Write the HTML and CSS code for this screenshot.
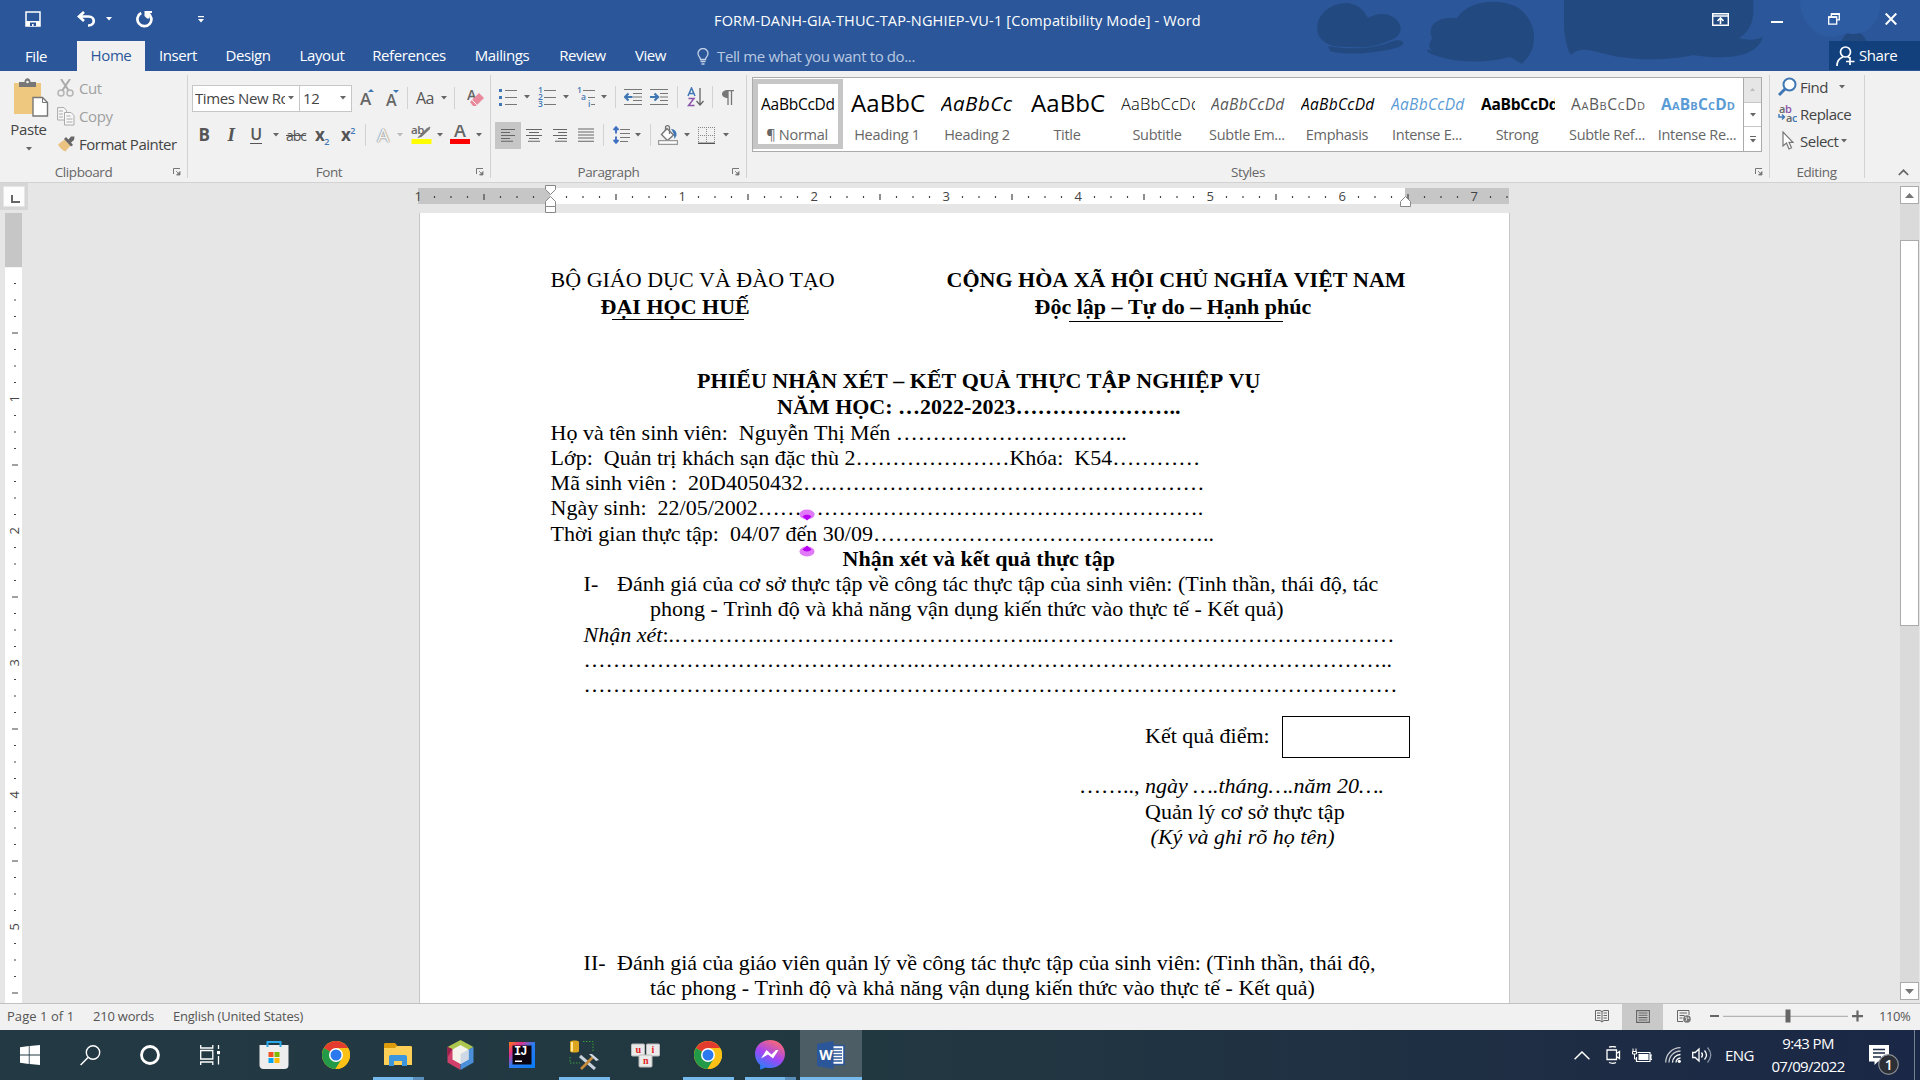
FILE: index.html
```html
<!DOCTYPE html>
<html lang="en">
<head>
<meta charset="utf-8">
<title>FORM-DANH-GIA-THUC-TAP-NGHIEP-VU-1 - Word</title>
<link rel="stylesheet" href="styles.css">
</head>
<body>
<svg class="defs" width="0" height="0">
  <defs>
    <symbol id="launcher" viewBox="0 0 8 8"><path d="M.5 6V.5H7" fill="none" stroke="#777"/><path d="M3 3l3 3M7 3.5V7H3.5z" fill="#777" stroke="#777" stroke-width=".8"/></symbol>
    <symbol id="arrow" viewBox="0 0 6 4"><path d="M0 0h6L3 3.4z"/></symbol>
    <symbol id="chrome" viewBox="0 0 28 28">
      <circle cx="14" cy="14" r="14" fill="#fbc116"/>
      <path d="M14 14L1.9 7A14 14 0 0 1 26.1 7z" fill="#e33b2e"/>
      <path d="M1.9 7A14 14 0 0 0 13.5 28L20 17.5 14 14z" fill="#229a48"/>
      <path d="M14 7h12.1A14 14 0 0 1 13.5 28l6.6-10.5z" fill="#fbc116"/>
      <circle cx="14" cy="14" r="7" fill="#fff"/><circle cx="14" cy="14" r="5.5" fill="#2b78ef"/>
    </symbol>
  </defs>
</svg>

<header class="titlebar">
  <svg class="clouds" width="620" height="71" viewBox="0 0 620 71">
    <g fill="#234a80">
      <path d="M20 38C10 20 28 2 48 3c12 2 16 8 20 15 14-8 28-3 32 7 3 7-3 14-12 16-16 8-30 6-42 6-14 0-20-3-26-9z"/>
      <path d="M28 46c20 4 46 3 62-4 12-5 20 2 6 6-20 5-50 8-66 3z"/>
      <path d="M132 38c-6-14 8-22 25-20C168 0 202-3 220 9c16 13 18 34 8 48l-6 7-12-7c-22 6-50 6-70 0-16-4-16-10-8-6-5-5-2-8 0-13z"/>
      <path d="M264 0h189c2 19-2 31-14 38 14 4 24 0 24-2-4 20-34 25-70 19-20 5-60 7-92-2-12-3-22-6-30 2-4-5-6-17-7-26z"/>
      <path d="M540 46c4-20 24-19 28 0z"/>
    </g>
    <path d="M500 0h80c2 22-14 38-34 33-24 12-46-8-46-33z" fill="#2d5ca3"/>
  </svg>
  <div class="quick">
    <svg width="16" height="16" viewBox="0 0 16 16"><path d="M1 1h14v14H1z" fill="none" stroke="#fff" stroke-width="1.5"/><path d="M1 10h14v5H1z" fill="#fff"/><path d="M5 11.5h6V15H8.6v-2H7v2H5z" fill="#2b579a"/></svg>
    <svg width="19" height="16" viewBox="0 0 19 16"><path d="M7 1L2 5.5 7 10M3 5.5h8.5c7 0 7 9 0 9H11" fill="none" stroke="#fff" stroke-width="2.7"/></svg>
    <svg class="white" width="6" height="4"><use href="#arrow"/></svg>
    <svg width="17" height="17" viewBox="0 0 17 17"><path d="M5.2 2A7 7 0 1 0 12 2.2" fill="none" stroke="#fff" stroke-width="2.7"/><path d="M8.5 0H16v2h-2.5v5.6h-2.4L8.5 5z" fill="#fff"/></svg>
    <svg width="6" height="7" viewBox="0 0 6 7"><path d="M0 0h6v1.2H0zM0 3h6L3 6.4z" fill="#fff"/></svg>
  </div>
  <div class="title">FORM-DANH-GIA-THUC-TAP-NGHIEP-VU-1 [Compatibility Mode] - Word</div>
  <div class="winctl">
    <svg width="17" height="13" viewBox="0 0 17 13"><path d="M.7.7h15.6v11.6H.7zM1 3h15" fill="none" stroke="#fff" stroke-width="1.4"/><path d="M8.5 11V5.5M5.5 8l3-3 3 3" fill="none" stroke="#fff" stroke-width="1.6"/></svg>
    <svg width="12" height="12" viewBox="0 0 12 12"><path d="M0 8h12v2H0z" fill="#fff"/></svg>
    <svg width="12" height="12" viewBox="0 0 12 12"><path d="M3.3 3.5V.8h8v6H9M.7 4h8v7.2h-8z" fill="none" stroke="#fff" stroke-width="1.3"/><path d="M3 .3h9v1.6H3zM0 3.5h9v1.6H0z" fill="#fff"/></svg>
    <svg width="12" height="12" viewBox="0 0 12 12"><path d="M.7.5l10.6 11M11.3.5L.7 11.5" stroke="#fff" stroke-width="2"/></svg>
  </div>
</header>

<nav class="tabs">
  <span class="file">File</span><span class="active">Home</span><span>Insert</span><span>Design</span><span>Layout</span><span>References</span><span>Mailings</span><span>Review</span><span>View</span>
  <div class="tell">
    <svg width="12" height="17" viewBox="0 0 12 17"><path d="M3.5 11.5C3.5 9 1 8.500 1 5.500a5 5 0 0 1 10 0c0 3-2.500 3.500-2.500 6zM3.500 13.500h5M4.500 16h3" fill="none" stroke="#c3d0e6" stroke-width="1.300"/></svg>
    <span>Tell me what you want to do...</span>
  </div>
  <div class="share">
    <svg width="19" height="20" viewBox="0 0 19 20"><circle cx="9.500" cy="6" r="5" fill="none" stroke="#fff" stroke-width="1.700"/><path d="M1 20c0-5 3-8 6-9M12 11l2 1M14 11v8M10 15.500h8.500" fill="none" stroke="#fff" stroke-width="1.700"/></svg>
    <span>Share</span>
  </div>
</nav>

<section class="ribbon">
  <div class="group g-clip">
    <div class="body clip">
      <div class="paste">
        <svg width="36" height="40" viewBox="0 0 36 40"><path d="M1 5h27v31H1z" fill="#edc87e"/><path d="M6 9V4h5.500c0-5 6-5 6 0H23v5z" fill="#777"/><circle cx="14.500" cy="4" r="1.300" fill="#f1f1f1"/><path d="M20 19.500h9.500l5 5V38H20z" fill="#fff" stroke="#777" stroke-width="1.400"/><path d="M29.500 19.500v5h5" fill="none" stroke="#777"/></svg>
        <span>Paste</span>
        <svg class="gray" width="6" height="4"><use href="#arrow"/></svg>
      </div>
      <div class="cliplist">
        <div class="dim"><svg width="18" height="18" viewBox="0 0 18 18"><path d="M4 0l8 12M13 0L5 12" fill="none" stroke="#aaa" stroke-width="2"/><circle cx="4" cy="14" r="3" fill="none" stroke="#b5b5b5" stroke-width="1.500"/><circle cx="13" cy="14" r="3" fill="none" stroke="#b5b5b5" stroke-width="1.500"/></svg>Cut</div>
        <div class="dim"><svg width="18" height="19" viewBox="0 0 18 19"><path d="M.6.600H7l2.500 3V13H.600z" fill="#f8f8f8" stroke="#aaa"/><path d="M7.500 5.500H14l3 3v9.500H7.500z" fill="#f8f8f8" stroke="#aaa"/><path d="M2 4h4M2 7h4M2 10h4M9.500 9h4M9.500 12h6M9.500 15h6" stroke="#aaa"/></svg>Copy</div>
        <div class="painter"><svg width="18" height="16" viewBox="0 0 18 16"><path d="M7.500 3.500l6 6-5 6c-3-1-6-4-7.500-7z" fill="#eac282"/><path d="M7 3l2-2 2.500 2.500L14 .5l3.500 0-.5 3.500-3 2.500L16 9l-2 1.500z" fill="#666"/></svg>Format Painter</div>
      </div>
    </div>
    <footer><span>Clipboard</span><svg width="8" height="8"><use href="#launcher"/></svg></footer>
  </div>

  <div class="group g-font">
    <div class="body">
      <div class="row f1">
        <div class="combo"><span>Times New Ro</span><svg class="gray" width="6" height="4"><use href="#arrow"/></svg></div>
        <div class="combo"><span>12</span><svg class="gray" width="6" height="4"><use href="#arrow"/></svg></div>
        <b class="grow">A<svg width="6" height="3" viewBox="0 0 6 3"><path d="M0 3l3-3 3 3z" fill="#3f77b5"/></svg></b>
        <b class="grow shrink">A<svg width="6" height="3" viewBox="0 0 6 3"><path d="M0 0h6L3 3z" fill="#3f77b5"/></svg></b>
        <i class="sep"></i>
        <span class="aa">Aa</span>
        <svg class="gray" width="6" height="4"><use href="#arrow"/></svg>
        <i class="sep"></i>
        <svg width="17" height="20" viewBox="0 0 17 20"><text x="0" y="11.500" class="ic" font-size="14" font-weight="600">A</text><path d="M3 14l9-9 5 5-8 8H6z" fill="#e88a9b"/><path d="M5 12l5 5" stroke="#f1f1f1"/></svg>
      </div>
      <div class="row f2">
        <b class="glyph">B</b>
        <b class="glyph it">I</b>
        <b class="glyph un">U</b>
        <svg class="gray" width="6" height="4"><use href="#arrow"/></svg>
        <span class="strike">abc</span>
        <b class="glyph">x<sub>2</sub></b>
        <b class="glyph">x<sup>2</sup></b>
        <i class="sep"></i>
        <span class="effect">A</span>
        <svg class="light" width="6" height="4"><use href="#arrow"/></svg>
        <svg width="21" height="20" viewBox="0 0 21 20"><text x="0" y="8.500" class="ic" font-size="11.500" font-weight="600">ab</text><path d="M7 12l9-9 3.500-1.500-1 3-8 7.500-4 1z" fill="#777"/><path d="M.5 14h20v5H.5z" fill="#ff0"/></svg>
        <svg class="gray" width="6" height="4"><use href="#arrow"/></svg>
        <svg width="20" height="20" viewBox="0 0 20 20"><text x="4" y="12" class="ic" font-size="18" font-weight="600">A</text><path d="M0 14h20v5H0z" fill="red"/></svg>
        <svg class="gray" width="6" height="4"><use href="#arrow"/></svg>
      </div>
    </div>
    <footer><span>Font</span><svg width="8" height="8"><use href="#launcher"/></svg></footer>
  </div>

  <div class="group g-para">
    <div class="body">
      <div class="row p1">
        <svg width="18" height="18" viewBox="0 0 18 18"><path d="M6 2.500h12M6 9.500h12M6 16.500h12" stroke="#777" stroke-width="1.200"/><path d="M0 1h3v3H0zM0 8h3v3H0zM0 15h3v3H0z" fill="#3f77b5"/></svg>
        <svg class="gray" width="6" height="4"><use href="#arrow"/></svg>
        <svg width="18" height="20" viewBox="0 0 18 20"><path d="M6 3.500h12M6 10.500h12M6 17.500h12" stroke="#777" stroke-width="1.200"/><g class="num"><text x="0" y="6">1</text><text x="0" y="13">2</text><text x="0" y="20">3</text></g></svg>
        <svg class="gray" width="6" height="4"><use href="#arrow"/></svg>
        <svg width="18" height="20" viewBox="0 0 18 20"><path d="M6 3.500h12M11 10.500h7M14 17.500h4" stroke="#777" stroke-width="1.200"/><g class="num"><text x="0" y="6">1</text><text x="4" y="13">a</text><text x="11" y="19.500">i</text></g></svg>
        <svg class="gray" width="6" height="4"><use href="#arrow"/></svg>
        <i class="sep"></i>
        <svg width="18" height="18" viewBox="0 0 18 18"><path d="M0 1.500h18M9 5.500h9M9 9h9M9 12.500h9M0 16.500h18" stroke="#777" stroke-width="1.200"/><path d="M8.500 9H1.500M4.500 5.500L1 9l3.500 3.500" fill="none" stroke="#3f77b5" stroke-width="2.200"/></svg>
        <svg width="18" height="18" viewBox="0 0 18 18"><path d="M0 1.500h18M10 5.500h8M10 9h8M10 12.500h8M0 16.500h18" stroke="#777" stroke-width="1.200"/><path d="M0 9h7M4.500 5.500L8 9l-3.500 3.500" fill="none" stroke="#3f77b5" stroke-width="2.200"/></svg>
        <i class="sep"></i>
        <svg width="17" height="20" viewBox="0 0 17 20"><path d="M1 9L4.500 1 8 9M2 6.500h5" fill="none" stroke="#3f77b5" stroke-width="1.500"/><path d="M1.500 11.500H7l-5.500 7H7.500" fill="none" stroke="#8b54a8" stroke-width="1.500"/><path d="M13 1v17M9.500 14l3.500 4 3.500-4" fill="none" stroke="#666" stroke-width="1.300"/></svg>
        <i class="sep"></i>
        <svg width="12" height="15" viewBox="0 0 12 15"><path d="M6 0C-2 0-2 8 6 8z" fill="#777"/><path d="M5.500 .5H12M6 0v15M9.500 0v15" fill="none" stroke="#777" stroke-width="1.300"/></svg>
      </div>
      <div class="row p2">
        <span class="on"><svg width="14" height="14" viewBox="0 0 14 14"><path d="M0 1.500h14M0 4.500h9M0 7.500h14M0 10.500h9M0 13.300h12" stroke="#666" stroke-width="1.100"/></svg></span>
        <svg width="16" height="14" viewBox="0 0 16 14"><path d="M0 1.500h16M3 4.500h10M0 7.500h16M3 10.500h10M2 13.300h12" stroke="#666" stroke-width="1.100"/></svg>
        <svg width="14" height="14" viewBox="0 0 14 14"><path d="M0 1.500h14M5 4.500h9M0 7.500h14M5 10.500h9M2 13.300h12" stroke="#666" stroke-width="1.100"/></svg>
        <svg width="16" height="14" viewBox="0 0 16 14"><path d="M0 1h16M0 4h16M0 7h16M0 10h16M0 13.300h16" stroke="#666" stroke-width="1.100"/></svg>
        <i class="sep"></i>
        <svg width="17" height="18" viewBox="0 0 17 18"><path d="M7 3.500h10M7 7.500h10M7 11.500h10M7 15.500h8" stroke="#777" stroke-width="1.200"/><path d="M3 1.500v6M3 10.500v6M.5 4L3 1.200 5.500 4M.5 14L3 16.800 5.500 14" fill="none" stroke="#3f6fc0" stroke-width="1.900"/></svg>
        <svg class="gray" width="6" height="4"><use href="#arrow"/></svg>
        <i class="sep"></i>
        <svg width="20" height="20" viewBox="0 0 20 20"><path d="M9 3.500l6.500 6.500-6 5.500L3.500 9.500z" fill="#fff" stroke="#777" stroke-width="1.400"/><path d="M7.500 6V2.500c0-2.500 4-2.500 4 0V9" fill="none" stroke="#777" stroke-width="1.300"/><path d="M13 4c4 0 6 3 5.500 6.500L16.500 14c-.5-3 0-5-3.500-10z" fill="#3f77b5"/><path d="M.6 15.600h18.800V19.400H.6z" fill="#fff" stroke="#999" stroke-width="1.200"/></svg>
        <svg class="gray" width="6" height="4"><use href="#arrow"/></svg>
        <svg width="17" height="17" viewBox="0 0 17 17"><path d="M0 .5h17M.5 0v17M8.500 0v17M16.500 0v17M0 8.500h17" stroke="#888" stroke-dasharray="1 1"/><path d="M0 16.300h17" stroke="#555" stroke-width="1.400"/></svg>
        <svg class="gray" width="6" height="4"><use href="#arrow"/></svg>
      </div>
    </div>
    <footer><span>Paragraph</span><svg width="8" height="8"><use href="#launcher"/></svg></footer>
  </div>

  <div class="group g-styles">
    <div class="body">
      <div class="gallery">
        <div class="style sel"><div class="sample">AaBbCcDd</div><span>¶ Normal</span></div>
        <div class="style"><div class="sample big">AaBbC</div><span>Heading 1</span></div>
        <div class="style"><div class="sample mid">AaBbCc</div><span>Heading 2</span></div>
        <div class="style"><div class="sample big">AaBbC</div><span>Title</span></div>
        <div class="style"><div class="sample sub">AaBbCcDd</div><span>Subtitle</span></div>
        <div class="style"><div class="sample em soft">AaBbCcDd</div><span>Subtle Em...</span></div>
        <div class="style"><div class="sample em">AaBbCcDd</div><span>Emphasis</span></div>
        <div class="style"><div class="sample em blue">AaBbCcDd</div><span>Intense E...</span></div>
        <div class="style"><div class="sample strong">AaBbCcDd</div><span>Strong</span></div>
        <div class="style"><div class="sample caps soft">AaBbCcDd</div><span>Subtle Ref...</span></div>
        <div class="style"><div class="sample caps blue heavy">AaBbCcDd</div><span>Intense Re...</span></div>
        <div class="scroller">
          <div class="off"><svg width="5" height="3" viewBox="0 0 5 3"><path d="M0 3l2.500-3L5 3z" fill="#bbb"/></svg></div>
          <div><svg class="gray" width="6" height="4"><use href="#arrow"/></svg></div>
          <div><svg class="gray" width="6" height="7" viewBox="0 0 6 7"><path d="M0 0h6v1H0zM0 3h6L3 6.400z"/></svg></div>
        </div>
      </div>
    </div>
    <footer><span>Styles</span><svg width="8" height="8"><use href="#launcher"/></svg></footer>
  </div>

  <div class="group g-edit">
    <div class="body editing">
      <div><svg width="19" height="19" viewBox="0 0 19 19"><circle cx="11.500" cy="7.500" r="6" fill="#fff" stroke="#3f77b5" stroke-width="2"/><path d="M7 12l-6 6" stroke="#3f77b5" stroke-width="3"/></svg>Find<svg class="gray far" width="6" height="4"><use href="#arrow"/></svg></div>
      <div><svg width="19" height="19" viewBox="0 0 19 19"><text x="1" y="8.500" class="ic" font-size="11" font-weight="600">a<tspan fill="#8b54a8">b</tspan></text><text x="8" y="17.500" class="ic" font-size="11" font-weight="600">a<tspan fill="#3f77b5">c</tspan></text><path d="M1 10v3h5M4 10.500L6.500 13 4 15.500" fill="none" stroke="#3f77b5" stroke-width="1.400"/></svg>Replace</div>
      <div><svg width="19" height="19" viewBox="0 0 19 19"><path d="M5 1v14l3.500-3 2.500 6 2.500-1.200-2.500-5.500h4z" fill="#fff" stroke="#777" stroke-width="1.200"/></svg>Select<svg class="gray near" width="6" height="4"><use href="#arrow"/></svg></div>
    </div>
    <footer><span>Editing</span></footer>
  </div>
  <div class="collapse"><svg width="11" height="7" viewBox="0 0 11 7"><path d="M.8 6L5.500 1.300 10.200 6" fill="none" stroke="#666" stroke-width="1.700"/></svg></div>
</section>

<main class="work">
  <div class="left">
    <div class="tabsel"><div><svg width="9" height="8" viewBox="0 0 9 8"><path d="M1 0v7h8" fill="none" stroke="#666" stroke-width="2"/></svg></div></div>
    <svg class="vruler" width="17" height="790" viewBox="0 0 17 790">
      <defs><pattern id="vt" width="17" height="132" y="54" patternUnits="userSpaceOnUse"><path d="M9 16.500h2M9 33h2M9 49.500h2M7 66h6M9 82.500h2M9 99h2M9 115.500h2" stroke="#444" stroke-width="1.200"/></pattern></defs>
      <path d="M0 0h17v54H0z" fill="#c6c6c6"/><path d="M0 54.500h17V790H0z" fill="#fff"/><path d="M0 55h17v735H0z" fill="url(#vt)"/>
      <g class="rn"><text transform="translate(14 186) rotate(-90)">1</text><text transform="translate(14 318) rotate(-90)">2</text><text transform="translate(14 450) rotate(-90)">3</text><text transform="translate(14 582) rotate(-90)">4</text><text transform="translate(14 714) rotate(-90)">5</text></g>
    </svg>
  </div>
  <div class="center">
    <svg class="hruler" width="1091" height="30" viewBox="0 0 1091 30">
      <defs><pattern id="ht" width="132" height="16" x="0" y="5" patternUnits="userSpaceOnUse"><path d="M16.500 8v2M33 8v2M49.500 8v2M66 6v6M82.500 8v2M99 8v2M115.500 8v2" stroke="#444" stroke-width="1.200"/></pattern></defs>
      <path d="M0 5h1091v16H0z" fill="#c6c6c6"/><path d="M132 5h855v16H132z" fill="#fff"/><path d="M2 5h1089v16H2z" fill="url(#ht)"/>
      <g class="rn"><text x="0" y="18">1</text><text x="264" y="18">1</text><text x="396" y="18">2</text><text x="528" y="18">3</text><text x="660" y="18">4</text><text x="792" y="18">5</text><text x="924" y="18">6</text><text x="1056" y="18">7</text></g>
      <g fill="#fff" stroke="#888"><path d="M127.500 2.500h10v4l-5 5-5-5z"/><path d="M127.500 23.500v-5l5-5 5 5v5z"/><path d="M127.500 23.500h10v6h-10z"/><path d="M982.500 23.500v-5l5-5 5 5v5z"/></g>
    </svg>
    <article class="page">
      <div class="head">
        <div class="h1">BỘ GIÁO DỤC VÀ ĐÀO TẠO</div>
        <div class="h2"><b>CỘNG HÒA XÃ HỘI CHỦ NGHĨA VIỆT NAM</b></div>
        <div class="h3"><b>ĐẠI HỌC HUẾ</b><hr></div>
        <div class="h4"><b>Độc lập – Tự do – Hạnh phúc</b><hr></div>
      </div>
      <p class="t1"><b>PHIẾU NHẬN XÉT – KẾT QUẢ THỰC TẬP NGHIỆP VỤ</b></p>
      <p class="t2"><b>NĂM HỌC: …2022-2023…………………..</b></p>
      <p>Họ và tên sinh viên:&nbsp; Nguyễn Thị Mến …………………………..</p>
      <p>Lớp:&nbsp; Quản trị khách sạn đặc thù 2…………………Khóa:&nbsp; K54…………</p>
      <p>Mã sinh viên :&nbsp; 20D4050432….……………………………………………</p>
      <p>Ngày sinh:&nbsp; 22/05/2002…………………………………………………….</p>
      <p>Thời gian thực tập:&nbsp; 04/07 đến 30/09………………………………………..</p>
      <p class="t3"><b>Nhận xét và kết quả thực tập</b></p>
      <p class="item"><span>I-</span>Đánh giá của cơ sở thực tập về công tác thực tập của sinh viên: (Tinh thần, thái độ, tác</p>
      <p class="cont">phong - Trình độ và khả năng vận dụng kiến thức vào thực tế - Kết quả)</p>
      <p class="ind"><i>Nhận xét</i>:.………….………………………………..…………………………………………</p>
      <p class="ind">……………………………………….………………………………………………………..</p>
      <p class="ind">…………………………………………………………………………………………………</p>
      <div class="score"><span>Kết quả điểm:</span><div class="scorebox"></div></div>
      <p class="date">…….., <i>ngày ….tháng….năm 20….</i></p>
      <p class="sign">Quản lý cơ sở thực tập</p>
      <p class="sign2"><i>(Ký và ghi rõ họ tên)</i></p>
      <p class="item second"><span>II-</span>Đánh giá của giáo viên quản lý về công tác thực tập của sinh viên: (Tinh thần, thái độ,</p>
      <p class="cont">tác phong - Trình độ và khả năng vận dụng kiến thức vào thực tế - Kết quả)</p>
      <svg class="handles" width="16" height="48" viewBox="0 0 16 48"><g fill="#e07af8"><ellipse cx="8" cy="5.500" rx="7.500" ry="5"/><ellipse cx="8" cy="42.500" rx="7.500" ry="5"/></g><g fill="#b800f5"><path d="M3.500 7.500c2-2.500 7-2.500 9 0L8 11.500zM3.500 40.500c2 2.500 7 2.500 9 0L8 36.500z"/></g></svg>
    </article>
  </div>
  <div class="vscroll">
    <div class="sb"><svg width="9" height="5" viewBox="0 0 9 5"><path d="M0 5l4.500-5L9 5z" fill="#777"/></svg></div>
    <div class="thumb"></div>
    <div class="sb down"><svg width="9" height="5" viewBox="0 0 9 5"><path d="M0 0h9L4.500 5z" fill="#777"/></svg></div>
  </div>
</main>

<div class="status">
  <span class="s1">Page 1 of 1</span><span class="s2">210 words</span><span class="s3">English (United States)</span>
  <div class="views">
    <div><svg width="14" height="14" viewBox="0 0 14 14"><path d="M.5 1.500H5l2 1 2-1h4.500v10H9l-2 1.500-2-1.500H.5zM7 2v11" fill="none" stroke="#666"/><path d="M2 4h3.500M2 6.500h3.500M2 9h3.500M8.500 4H12M8.500 6.500H12M8.500 9H12" stroke="#666"/></svg></div>
    <div class="cur"><svg width="14" height="13" viewBox="0 0 14 13"><path d="M.6.600h12.800v11.800H.6zM2.500 3h9M2.500 5.300h9M2.500 7.600h9M2.500 10h9" fill="none" stroke="#666" stroke-width="1.100"/></svg></div>
    <div><svg width="14" height="13" viewBox="0 0 14 13"><path d="M6 11.500H.5V.5h11.500V5M2.500 3h7.500M2.500 5.500h5M2.500 8h3" fill="none" stroke="#666"/><circle cx="10" cy="9" r="3.800" fill="#777"/><path d="M8 7l2 1-1 3M11 7l1 2" stroke="#ddd" fill="none"/></svg></div>
  </div>
  <svg class="zoombar" width="155" height="14" viewBox="0 0 155 14"><path d="M0 6h9v2H0zM142 6h11v2.200h-11zM146.400 1.500h2.200v11h-2.200z" fill="#666"/><path d="M13 7.300h125" stroke="#a5a5a5"/><path d="M75.500 0.500h5v13h-5z" fill="#666"/></svg>
  <span class="pct">110%</span>
</div>

<footer class="taskbar">
  <div class="sys">
    <svg width="20" height="20" viewBox="0 0 20 20"><path d="M0 2.300L8.800 1.100V9.500H0zM9.600 1L20 0v9.500H9.600zM0 10.400h8.800V19L0 17.800zM9.600 10.400H20V20L9.600 19z" fill="#fff"/></svg>
    <svg width="21" height="21" viewBox="0 0 21 21"><circle cx="13" cy="7.500" r="6.700" fill="none" stroke="#fff" stroke-width="1.400"/><path d="M8 12.500L.6 20" stroke="#fff" stroke-width="1.500"/></svg>
    <svg width="20" height="20" viewBox="0 0 20 20"><circle cx="10" cy="10" r="8.500" fill="none" stroke="#fff" stroke-width="2.800"/></svg>
    <svg width="20" height="20" viewBox="0 0 20 20"><path d="M.7 0v3h12.100V0M.7 5.500h12.100v8.500H.7zM.7 20v-3h12.100v3M18.500 0v4M18.500 11v8.500" fill="none" stroke="#fff" stroke-width="1.300"/><path d="M17 6h3v3.200h-3z" fill="#fff"/></svg>
  </div>
  <div class="apps">
    <div><svg width="30" height="30" viewBox="0 0 30 30"><path d="M.5 5h29v20c0 3-2 4-4 4h-21c-3 0-4-2-4-4z" fill="#eee"/><path d="M9.500 12h5v5h-5z" fill="#f25022"/><path d="M15.500 12h5v5h-5z" fill="#7fba00"/><path d="M9.500 18h5v5h-5z" fill="#00a4ef"/><path d="M15.500 18h5v5h-5z" fill="#ffb900"/><path d="M8.500 7V2h13v5" fill="none" stroke="#29a9e8" stroke-width="2"/></svg></div>
    <div><svg width="28" height="28"><use href="#chrome"/></svg></div>
    <div class="run split"><svg width="28" height="24" viewBox="0 0 28 24"><path d="M0 1.500C0 .5.500 0 1.500 0H11l2.500 3H27v5H0z" fill="#dd9b0c"/><path d="M0 5h11l2-2h13.500c1 0 1.500.500 1.500 1.500V22H0z" fill="#fdcf56"/><path d="M5 23V14c0-1.500 1-2 2-2h14c1.500 0 2 1 2 2v9h-5v-5h-8v5z" fill="#3b96dd"/></svg></div>
    <div><svg width="27" height="30" viewBox="0 0 27 30"><path d="M13.500 0L26.500 7 13.500 14 .5 7z" fill="#adc64d"/><path d="M.5 7l13 7v16L.5 22.500z" fill="#d0406a"/><path d="M26.500 7l-13 7v16l13-7.500z" fill="#4a8fd8"/><path d="M.5 7v10l5-8z" fill="#9c1f48"/><path d="M13.500 5l8 4.500v10l-8 4.500-8-4.500v-10z" fill="#f4f4ec"/><path d="M13.500 14l8-4.500v10l-8 4.500z" fill="#cfd9e5"/></svg></div>
    <div><svg width="26" height="26" viewBox="0 0 26 26"><defs><linearGradient id="ij" x1="0" y1="0" x2="1" y2="1"><stop offset="0" stop-color="#f97a12"/><stop offset=".25" stop-color="#e0318c"/><stop offset=".5" stop-color="#2b7cf0"/><stop offset="1" stop-color="#087cfa"/></linearGradient></defs><path d="M0 0h26v26H0z" fill="url(#ij)"/><path d="M3.500 3.500h19v19h-19z" fill="#0b0410"/><text x="5" y="13" class="ijt">IJ</text><path d="M6 18.500h7v1.500H6z" fill="#fff"/></svg></div>
    <div class="run"><svg width="30" height="30" viewBox="0 0 30 30"><path d="M1 2c0-2 9-2 9 0v9c0 2-9 2-9 0z" fill="#dca51f"/><path d="M3 2v9.500" stroke="#ffe79a" stroke-width="2"/><path d="M14 1.500h10v10M1 17v6h10" fill="none" stroke="#3d9c35" stroke-dasharray="1.500 1.500"/><path d="M11 16l15 13" stroke="#c9d3dd" stroke-width="3"/><path d="M24 17L12 29" stroke="#c68a3a" stroke-width="2.600"/><path d="M20 14l7 7 3-1-7-6z" fill="#cfd8e2"/></svg></div>
    <div><svg width="30" height="26" viewBox="0 0 30 26"><g fill="#e9e9e9" stroke="#b9b9b9"><rect x=".5" y="2" width="13" height="12" rx="1"/><rect x="15.500" y="2" width="13" height="12" rx="1"/><rect x="8" y="13" width="13" height="12" rx="1"/></g><g class="uk"><text x="4.500" y="10.500">u</text><text x="20.500" y="11">i</text><text x="12" y="21.500">n</text></g></svg></div>
    <div class="run"><svg width="28" height="28"><use href="#chrome"/></svg></div>
    <div class="run split"><svg width="30" height="30" viewBox="0 0 30 30"><defs><linearGradient id="ms" x1=".2" y1="1" x2=".7" y2="0"><stop offset="0" stop-color="#1b86fb"/><stop offset=".5" stop-color="#a345f5"/><stop offset="1" stop-color="#fb6a72"/></linearGradient></defs><path d="M15 0c8.500 0 15 6.200 15 14s-6.500 14-15 14c-1.600 0-3-.2-4.400-.6L5.200 29.800V25C2 22.500 0 18.700 0 14 0 6.200 6.500 0 15 0z" fill="url(#ms)"/><path d="M6 18.500l5.500-8.500 5 4.500 4.500-4.500h2.500L18 18.500l-5-4z" fill="#fff"/></svg></div>
    <div class="run cur"><svg width="28" height="28" viewBox="0 0 28 28"><path d="M13 4.500h14v19H13z" fill="#fff" stroke="#2b579a" stroke-width="1.600"/><path d="M16 8h9M16 11h9M16 14h9M16 17h9M16 20h9" stroke="#2b579a" stroke-width="1.400"/><path d="M0 3l16.500-3v28L0 25z" fill="#2b579a"/><text x="2.200" y="18.500" class="wt">W</text></svg></div>
  </div>
  <div class="tray">
    <svg width="16" height="9" viewBox="0 0 16 9"><path d="M.6 8.300L8 1l7.400 7.300" fill="none" stroke="#fff" stroke-width="1.500"/></svg>
    <svg width="15" height="18" viewBox="0 0 15 18"><path d="M1 4h9.500v9.500H1zM10.500 7.500l3-2v7l-3-2M3 1.200C5.500.300 8 .300 10 1.200M3 16.500c2.500 1 5 1 7 0" fill="none" stroke="#fff" stroke-width="1.300"/></svg>
    <svg width="20" height="15" viewBox="0 0 20 15"><path d="M5.500 4.500H18v9H4.500V9" fill="none" stroke="#fff" stroke-width="1.200"/><path d="M6.500 6h10v6h-10z" fill="#fff"/><path d="M18.500 7v4.500h1.500V7zM1 .5v3M4 .5v3M.5 3.500h4V6h-4zM2.500 6v5H5" fill="none" stroke="#fff"/></svg>
    <svg width="16" height="16" viewBox="0 0 16 16"><g fill="none" stroke="#fff" stroke-width="1.300"><path d="M11 15.500A4.500 4.500 0 0 1 15.500 11M7.500 15.500a8 8 0 0 1 8-8"/><path d="M4 15.500A11.500 11.500 0 0 1 15.500 4M.7 15.500A14.800 14.800 0 0 1 15.500.7" opacity=".75"/></g><circle cx="14.300" cy="14.300" r="1.600" fill="#fff"/></svg>
    <svg width="20" height="18" viewBox="0 0 20 18"><path d="M.7 6.500h2.500L7 3v12l-3.800-3.500H.7z" fill="none" stroke="#fff" stroke-width="1.300"/><path d="M9.500 6.500q2 2.500 0 5M12.500 4.500q4 4.500 0 9" fill="none" stroke="#fff" stroke-width="1.300"/><path d="M15.500 1.500q6.500 7.500 0 15" fill="none" stroke="#8893a5" stroke-width="1.300"/></svg>
    <span class="eng">ENG</span>
    <div class="clock"><span>9:43 PM</span><span>07/09/2022</span></div>
    <div class="note"><svg width="31" height="32" viewBox="0 0 31 32"><path d="M0 1h20v16.500H9L5.500 21v-3.500H0z" fill="#fff"/><path d="M4 5.500h12M4 9h12M4 13h8" stroke="#1c2b45" stroke-width="1.300"/><circle cx="19.500" cy="20.500" r="9.800" fill="#2c2f35" stroke="#8a8f96" stroke-width="1.200"/><text x="19.500" y="25.800" text-anchor="middle" class="badge">1</text></svg></div>
    <i class="peek"></i>
  </div>
</footer>
</body>
</html>
```
FILE: styles.css
```css
* { box-sizing: border-box; }
body { margin: 0; width: 1920px; height: 1080px; overflow: hidden; display: flex; flex-direction: column; font-family: "Open Sans", "Noto Sans", sans-serif; font-size: 15px; letter-spacing: -0.4px; color: #444; background: #e6e6e6; }
svg { display: block; flex: none; }
.defs { position: absolute; }
.gray { fill: #666; }
.light { fill: #bbb; }
.white { fill: #fff; }

/* title bar and tabs */
.titlebar { position: relative; z-index: 1; height: 41px; background: #2b579a; color: #fff; display: grid; grid-template-columns: 714px 1fr 220px; align-items: center; }
.titlebar::after { content: ""; position: absolute; left: 0; top: 41px; width: 1300px; height: 30px; background: #2b579a; }
.clouds { position: absolute; left: 1300px; top: 0; background: #2b579a; }
.quick { display: flex; align-items: center; padding: 0 0 3px 25px; }
.quick svg:nth-child(2) { margin-left: 36px; }
.quick svg:nth-child(3) { margin-left: 10px; }
.quick svg:nth-child(4) { margin-left: 24px; }
.quick svg:nth-child(5) { margin-left: 45px; }
.title { position: relative; font-size: 14.5px; letter-spacing: .15px; white-space: nowrap; }
.winctl { position: relative; display: flex; align-items: center; padding: 0 0 3px 12px; }
.winctl svg + svg { margin-left: 42px; }
.winctl svg:nth-child(3), .winctl svg:nth-child(4) { margin-left: 45px; }
.tabs { position: relative; z-index: 2; height: 30px; color: #fff; display: grid; grid-template-columns: 77px 68px 66px 74px 74px 100px 86px 75px 61px 1fr 91px; line-height: 29px; text-align: center; }
.file { padding-right: 5px; padding-top: 1px; }
.active { background: #f1f1f1; color: #2b579a; }
.tell { display: flex; align-items: center; padding-left: 16px; gap: 8px; color: #b9c8e0; }
.tell span { letter-spacing: -.37px; }
.share { display: flex; align-items: center; gap: 4px; padding-left: 7px; background: #12407c; height: 29px; }

/* ribbon */
.ribbon { height: 112px; background: #f1f1f1; border-bottom: 1px solid #d2d2d2; display: flex; }
.group { display: flex; flex-direction: column; position: relative; }
.group::after { content: ""; position: absolute; right: 0; top: 4px; height: 103px; width: 1px; background: #d2d2d2; }
.body { height: 88px; }
.group footer { height: 23px; display: grid; grid-template-columns: 1fr; align-items: center; justify-items: center; font-size: 13.5px; letter-spacing: -.4px; color: #666; padding-top: 2px; }
.group footer span, .group footer svg { grid-area: 1 / 1; }
.group footer svg { justify-self: end; margin-right: 7px; margin-top: 1px; }
.group footer span { margin-right: 21px; }
.g-clip { width: 188px; }
.g-font { width: 303px; }
.g-para { width: 256px; }
.g-styles { width: 1023px; }
.g-edit { width: 95px; }
.group.g-edit footer span { margin-right: 2px; }
.clip { display: flex; }
.paste { width: 57px; display: flex; flex-direction: column; align-items: center; padding-top: 7px; }
.paste svg:first-child { margin-left: 5px; }
.paste span { line-height: 20px; margin-top: 1px; }
.paste .gray { margin-top: 8px; }
.cliplist { padding-top: 3px; }
.cliplist > div { display: flex; align-items: center; gap: 4px; height: 28px; white-space: nowrap; }
.painter { letter-spacing: -.5px; }
.dim { color: #a0a0a0; }
.row { display: grid; align-items: center; justify-items: center; height: 38px; }
.f1 { padding: 8px 0 0 4px; height: 46px; grid-template-columns: 108px 52px 27px 24px 8px 28px 9px 12px 31px; }
.f2 { padding-left: 4px; grid-template-columns: 24px 30px 20px 20px 20px 32px 20px 14px 22px 12px 30px 8px 32px 6px; margin-top: -1px; }
.combo { width: 100%; height: 27px; border: 1px solid #c6c6c6; background: #fff; display: flex; align-items: center; justify-content: space-between; padding: 0 5px 0 2px; color: #444; }
.combo + .combo { border-left: 0; padding-left: 3px; }
.combo span { overflow: hidden; white-space: nowrap; max-width: 90px; font-size: 15px; }
.grow { position: relative; font-size: 17px; font-weight: 600; color: #666; line-height: 26px; margin-top: 1px; }
.grow svg { position: absolute; right: -3px; top: 3px; }
.shrink { font-size: 16px; margin-top: 3px; }
.sep { width: 1px; height: 22px; background: #d2d2d2; }
.aa { font-size: 16px; color: #555; }
.ic { font-family: "Open Sans", sans-serif; fill: #666; letter-spacing: -.3px; }
.glyph { font-size: 17px; color: #555; line-height: 20px; position: relative; }
.it { font-family: "Liberation Serif", serif; font-style: italic; font-size: 19px; }
.un { font-size: 16px; border-bottom: 1.5px solid #555; line-height: 17px; font-weight: 600; }
.strike { text-decoration: line-through; font-size: 14px; color: #555; letter-spacing: -1px; }
.glyph sub, .glyph sup { font-size: 9px; color: #3f77b5; line-height: 0; font-weight: 600; }
.effect { font-size: 19px; color: #f4f4f4; text-shadow: 0 0 1px #888, 0 0 2px #999, 0 0 1px #999; }
.p1 { padding: 6px 0 0 4px; height: 46px; grid-template-columns: 26px 12px 28px 10px 30px 6px 16px 20px 32px 4px 32px 2px 30px; }
.p2 { padding-left: 4px; margin-top: -1px; grid-template-columns: 26px 26px 26px 26px 8px 28px 6px 18px 18px 20px 18px 22px; }
.on { width: 26px; height: 27px; background: #c6c6c6; display: flex; align-items: center; justify-content: center; }
.num { fill: #3f77b5; font: 600 8.5px "Open Sans", sans-serif; }
.gallery { margin: 6px 0 0 5px; width: 1010px; height: 75px; border: 1px solid #ababab; background: #fff; display: flex; }
.style { width: 90px; flex: none; padding: 1px 8px 0; text-align: center; color: #666; font-size: 14.5px; letter-spacing: -.3px; }
.sel { box-shadow: inset 0 0 0 5px #c6c6c6; height: 70px; margin-top: 1px; padding-top: 0; }
.style span { display: block; line-height: 20px; white-space: nowrap; margin: 1px -4px 0 -6px; }
.sample { height: 45px; line-height: 50px; font-size: 15.5px; color: #000; overflow: hidden; white-space: nowrap; text-align: left; letter-spacing: -.25px; }
.big { font-size: 24px; letter-spacing: .1px; line-height: 48px; }
.mid { font-size: 20.5px; font-style: italic; font-weight: 500; letter-spacing: .5px; line-height: 49px; }
.sub { font-size: 16.5px; font-weight: 300; letter-spacing: .2px; }
.em { font-style: italic; letter-spacing: .3px; }
.soft { color: #5a5a5a; }
.blue { color: #5b9bd5; }
.strong { font-weight: 700; }
.caps { font-variant: small-caps; letter-spacing: .6px; }
.heavy { font-weight: 700; letter-spacing: .2px; }
.scroller { width: 18px; margin-left: auto; border-left: 1px solid #ababab; display: flex; flex-direction: column; }
.scroller div { flex: 1; display: flex; align-items: center; justify-content: center; }
.scroller div + div { border-top: 1px solid #c6c6c6; }
.off { background: #e6e6e6; }
.editing { padding: 2px 0 0 8px; }
.editing div { display: flex; align-items: center; height: 27px; gap: 3px; white-space: nowrap; letter-spacing: -.5px; }
.far { margin-left: 8px; }
.near { margin-left: 0; }
.collapse { margin: 98px 0 0 33px; }

/* workspace */
.work { height: 820px; display: flex; }
.left { width: 418px; flex: none; }
.tabsel { width: 28px; height: 27px; background: #d6d6d6; padding: 3px; }
.tabsel div { width: 22px; height: 21px; background: #fcfcfc; border: 1px solid #e6e6e6; padding: 8px 0 0 7px; }
.vruler { margin: 3px 0 0 5px; }
.rn { font: 13px "Open Sans", sans-serif; fill: #444; text-anchor: middle; }
.center { width: 1092px; flex: none; }
.hruler { overflow: visible; }
.page { position: relative; margin-left: 1px; width: 1091px; height: 790px; background: #fff; border: solid #c6c6c6; border-width: 0 1px; overflow: hidden; padding: 54px 0 0 130.6px; font-family: "Liberation Serif", serif; font-size: 22px; font-kerning: none; letter-spacing: 0; line-height: 25.28px; color: #000; white-space: nowrap; }
.page p { margin: 0; height: 25.28px; }
.head { display: grid; grid-template-columns: 396px 1fr; grid-template-rows: 26.5px 74.5px; }
.head hr { margin: 0; border: 0; height: 1px; background: #000; }
.h3 { padding-left: 50px; }
.h3 hr { width: 132px; margin-left: 11px; }
.h4 { padding-left: 88px; }
.h4 hr { width: 214px; margin-left: 34px; margin-top: 2px; }
.page .t1 { padding-left: 146.5px; height: 26.3px; }
.page .t2 { padding-left: 226.5px; }
.page .t3 { padding-left: 292px; }
.ind { padding-left: 33px; }
.cont { padding-left: 99.5px; }
.item { padding-left: 33px; display: flex; }
.item span { width: 33.5px; flex: none; }
.page .second { margin-top: 100.7px; }
.score { display: flex; align-items: flex-start; padding: 18.4px 0 0 594.5px; height: 75.84px; }
.score span { width: 137px; padding-top: 7.3px; }
.scorebox { width: 128px; height: 42px; border: 1px solid #000; }
.date { padding-left: 528.5px; }
.sign { padding-left: 594.5px; }
.sign2 { padding-left: 600px; }
.handles { position: absolute; left: 379px; top: 295.5px; }
.vscroll { width: 19px; margin-left: auto; margin-right: 1px; margin-top: 3px; margin-bottom: 3px; background: #dadada; display: flex; flex-direction: column; }
.sb { height: 18px; background: #fff; border: 1px solid #ababab; display: flex; align-items: center; justify-content: center; }
.thumb { height: 386px; margin-top: 36px; background: #fff; border: 1px solid #ababab; }
.down { margin-top: auto; }

/* status bar */
.status { height: 27px; background: #f1f1f1; border-top: 1px solid #c1c1c1; display: flex; align-items: center; font-size: 13px; letter-spacing: -.22px; color: #555; white-space: nowrap; }
.status > span { padding-bottom: 2px; }
.status .s1 { padding-left: 7px; width: 93px; letter-spacing: .05px; }
.s2 { width: 80px; }
.views { margin-left: auto; display: flex; height: 26px; }
.views div { width: 41px; display: flex; align-items: center; justify-content: center; padding-bottom: 2px; }
.cur { background: #c9c9c9; }
.zoombar { margin-left: 6px; margin-top: -2px; }
.pct { width: 55px; padding-left: 14px; letter-spacing: -.4px; }

/* taskbar */
.taskbar { height: 50px; background: linear-gradient(90deg, #233943 0, #223841 45%, #1f2f43 75%, #1a2746 100%); display: flex; }
.sys { display: grid; grid-template-columns: repeat(4, 60px); place-items: center; width: 243px; }
.apps { display: flex; }
.apps div { width: 62px; display: flex; align-items: center; justify-content: center; background: none; position: relative; }
.apps .cur { background: #4c5d66; margin-left: -1px; }
.run::after { content: ""; position: absolute; bottom: 0; left: 6px; width: 51px; height: 3px; background: #76b9ed; }
.split::after { background: linear-gradient(90deg, #76b9ed 40px, #5a8fbb 40px); }
.cur.run::after { left: 0; width: 62px; }
.tray { margin-left: auto; display: flex; align-items: center; color: #fff; width: 346px; letter-spacing: -.4px; }
.tray svg:nth-child(2) { margin-left: 16px; }
.tray svg:nth-child(3) { margin-left: 11px; }
.tray svg:nth-child(4) { margin-left: 13px; }
.tray svg:nth-child(5) { margin-left: 11px; }
.eng { width: 44px; padding-left: 13px; font-size: 15px; letter-spacing: -.6px; }
.clock { margin-left: 9px; width: 86px; font-size: 15px; display: flex; flex-direction: column; align-items: center; line-height: 23px; letter-spacing: -.65px; white-space: nowrap; }
.note { margin-left: 18px; padding-top: 9px; }
.peek { width: 1px; height: 50px; margin-left: 14px; background: #77808f; }
.ijt { font: 700 12px "Liberation Mono", monospace; fill: #fff; letter-spacing: -1px; }
.uk { font: 700 10px "Liberation Serif", serif; fill: #e21b1b; letter-spacing: 0; }
.wt { font: 700 14px "Open Sans", sans-serif; fill: #fff; letter-spacing: 0; }
.badge { font: 600 14px "Open Sans", sans-serif; fill: #fff; }
```
